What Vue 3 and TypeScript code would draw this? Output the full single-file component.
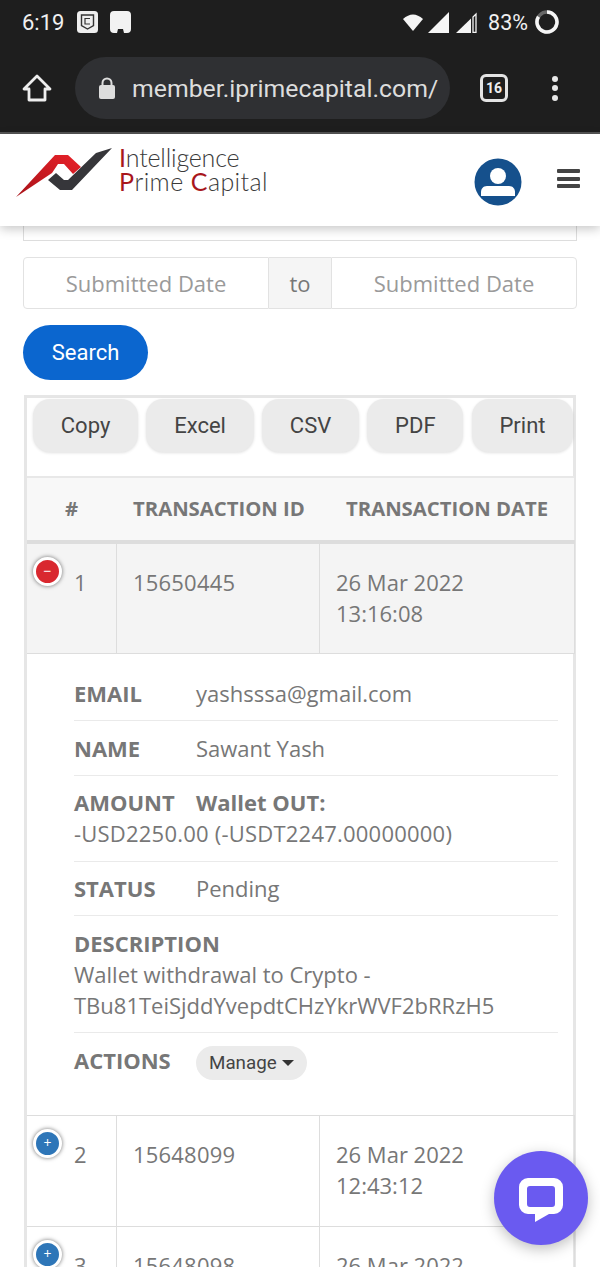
<script setup lang="ts">
interface Row { n: number; id: string; date: string; time: string; open?: boolean }
const rows: Row[] = [
  { n: 1, id: '15650445', date: '26 Mar 2022', time: '13:16:08', open: true },
  { n: 2, id: '15648099', date: '26 Mar 2022', time: '12:43:12' },
  { n: 3, id: '15648098', date: '26 Mar 2022', time: '12:40:00' },
]
const exportsList = ['Copy', 'Excel', 'CSV', 'PDF', 'Print']
</script>

<template>
  <div class="page">
    <div class="chrome">
      <div class="status">
        <span class="clock">6:19</span>
        <svg class="app" width="21" height="22" viewBox="0 0 21 22"><rect width="21" height="22" rx="3.500" fill="#eee"/><path d="M4.500 4h12v10.500l-6 3.500-6-3.500z" fill="none" stroke="#333" stroke-width="1.400"/><path d="M13 7.500H8v5.500h5" fill="none" stroke="#333" stroke-width="1.200"/></svg>
        <svg class="app" width="21" height="22" viewBox="0 0 21 22"><path d="M4 0h13a4 4 0 0 1 4 4v14a4 4 0 0 1-4 4h-3l-1-4H8l-1 4H4a4 4 0 0 1-4-4V4a4 4 0 0 1 4-4z" fill="#f2f2f2"/></svg>
        <span class="spacer"></span>
        <svg width="22" height="20" viewBox="0 0 22 20"><path d="M1 7 Q11 -2 21 7 L11 19z" fill="#f5f5f5"/></svg>
        <svg class="sig" width="21" height="21" viewBox="0 0 21 21"><path d="M21 0v21H0z" fill="#f5f5f5"/></svg>
        <svg class="sig2" width="21" height="21" viewBox="0 0 21 21"><path d="M15 6.500V21H0z" fill="#f5f5f5"/><path d="M20 2v18.300H17V5z" fill="none" stroke="#f5f5f5" stroke-width="1.300"/></svg>
        <span class="pct">83%</span>
        <svg class="batt" width="24" height="24" viewBox="0 0 24 24"><circle cx="12" cy="12" r="10" fill="none" stroke="#666" stroke-width="3.500"/><path d="M12 2A10 10 0 1 1 3.500 6.700" fill="none" stroke="#f5f5f5" stroke-width="3.500"/></svg>
      </div>
      <div class="toolbar">
        <svg class="home" width="30" height="30" viewBox="0 0 30 30"><path d="M15 3 2 16h5v11h16V16h5z" fill="none" stroke="#eee" stroke-width="2.800" stroke-linejoin="round"/></svg>
        <div class="omni">
          <svg width="18" height="24" viewBox="0 0 18 24"><path d="M4.500 10V7a4.500 4.500 0 0 1 9 0v3" fill="none" stroke="#ddd" stroke-width="2"/><rect x="1" y="9" width="16" height="14" rx="2" fill="#ddd"/></svg>
          <span class="url">member.iprimecapital.com/</span>
        </div>
        <div class="tabs">16</div>
        <div class="dots"><i></i><i></i><i></i></div>
      </div>
    </div>

    <header class="site">
      <svg class="mark" width="100" height="52" viewBox="0 0 100 52">
        <defs><linearGradient id="r" x1="0" y1="1" x2="1" y2="0"><stop offset="0" stop-color="#a81218"/><stop offset="1" stop-color="#e8222a"/></linearGradient></defs>
        <path d="M0 49 39 7h13l13 12-8 7-9-10H42L36 25z" fill="url(#r)"/>
        <path d="M32 32l8-7 8 7h4L80 5 96 0 56 42H44z" fill="#36363a"/>
      </svg>
      <div class="brand">
        <div class="b1"><em>I</em>ntelligence</div>
        <div class="b2"><em>P</em>rime <em>C</em>apital</div>
      </div>
      <span class="spacer"></span>
      <svg class="avatar" width="48" height="48" viewBox="0 0 48 48">
        <circle cx="24" cy="24" r="23.500" fill="#15508c"/>
        <circle cx="24" cy="18" r="8" fill="#fff"/>
        <path d="M7 38v-4c0-3 2-6 6-6h22c4 0 6 3 6 6v4z" fill="#fff"/>
      </svg>
      <div class="burger"><i></i><i></i><i></i></div>
    </header>

    <main class="content">
      <div class="stub"></div>
      <div class="dates">
        <div class="date">Submitted Date</div>
        <div class="to">to</div>
        <div class="date">Submitted Date</div>
      </div>
      <button class="search">Search</button>

      <div class="wrap">
        <div class="exports">
          <button v-for="e in exportsList" :key="e" class="exp">{{ e }}</button>
        </div>
        <table>
          <colgroup><col class="c1"><col class="c2"><col class="c3"></colgroup>
          <thead>
            <tr><th class="center">#</th><th>TRANSACTION ID</th><th class="th3">TRANSACTION DATE</th></tr>
          </thead>
          <tbody>
            <template v-for="r in rows" :key="r.n">
              <tr class="row" :class="{ opened: r.open }">
                <td class="num">
                  <span class="ctl" :class="r.open ? 'minus' : 'plus'">{{ r.open ? '−' : '+' }}</span>
                  {{ r.n }}
                </td>
                <td class="idc">{{ r.id }}</td>
                <td>{{ r.date }}<br>{{ r.time }}</td>
              </tr>
              <tr v-if="r.open" class="child">
                <td colspan="3">
                  <ul>
                    <li><b>EMAIL</b>yashsssa@gmail.com</li>
                    <li><b>NAME</b>Sawant Yash</li>
                    <li><b>AMOUNT</b><strong>Wallet OUT:</strong><br><span class="amt">-USD2250.00 (-USDT2247.00000000)</span></li>
                    <li><b>STATUS</b>Pending</li>
                    <li><b>DESCRIPTION</b><br>Wallet withdrawal to Crypto -<br>TBu81TeiSjddYvepdtCHzYkrWVF2bRRzH5</li>
                    <li class="act"><b>ACTIONS</b><button class="manage">Manage<i class="caret"></i></button></li>
                  </ul>
                </td>
              </tr>
            </template>
          </tbody>
        </table>
      </div>
    </main>

    <div class="chat">
      <svg width="44" height="44" viewBox="0 0 44 44"><path fill-rule="evenodd" fill="#fff" d="M9 0h26a9 9 0 0 1 9 9v18a9 9 0 0 1-9 9H30l-14 8v-8H9a9 9 0 0 1-9-9V9a9 9 0 0 1 9-9zM11 8a3 3 0 0 0-3 3v15a3 3 0 0 0 3 3h22a3 3 0 0 0 3-3V11a3 3 0 0 0-3-3z"/></svg>
    </div>
  </div>
</template>

<style>
html, body { margin: 0; height: 1267px; overflow: hidden; background: #fff; }
</style>

<style scoped>
.page { position: relative; width: 600px; height: 1267px; overflow: hidden; font-family: "Open Sans", sans-serif; color: #777; }
.spacer { flex: 1; }
.chrome { height: 132px; background: #1e1e1e; border-bottom: 2px solid #555; color: #eee; font-family: Roboto, sans-serif; }
.status { height: 44px; display: flex; align-items: center; padding: 0 41px 0 22px; }
.clock { font-size: 22px; width: 55px; color: #f0f0f0; }
.app { margin-right: 12px; }
.sig { margin-left: 4px; }
.sig2 { margin-left: 7px; }
.pct { font-size: 21.500px; margin-left: 11px; color: #f0f0f0; }
.batt { margin-left: 7px; }
.toolbar { height: 88px; display: flex; align-items: center; }
.home { margin-left: 22px; }
.omni { margin-left: 23px; width: 375px; height: 62px; border-radius: 31px; background: #2f3033; display: flex; align-items: center; box-sizing: border-box; padding-left: 23px; overflow: hidden; }
.url { margin-left: 16px; font-size: 24.800px; color: #ddd; white-space: nowrap; }
.tabs { margin-left: 30px; width: 28px; height: 28px; box-sizing: border-box; border: 3px solid #e4e4e4; border-radius: 6px; font-size: 14px; font-weight: 700; display: flex; align-items: center; justify-content: center; }
.dots { margin-left: 44px; display: flex; flex-direction: column; gap: 3.500px; }
.dots i { width: 6px; height: 6px; border-radius: 50%; background: #e8e8e8; display: block; }

.site { position: relative; z-index: 2; height: 92px; background: #fff; box-shadow: 0 3px 10px rgba(0,0,0,.22); display: flex; align-items: flex-start; padding: 13px 20px 0 16px; box-sizing: border-box; }
.mark { flex: none; margin-top: 1px; }
.brand { margin: -2px 0 0 3px; font-family: Lato, sans-serif; font-weight: 300; color: #3a3a3a; line-height: 24px; }
.brand em { font-style: normal; color: #a8161c; font-weight: 400; }
.b1 { font-size: 25px; letter-spacing: -.2px; }
.b2 { font-size: 25px; letter-spacing: .4px; }
.avatar { margin-top: 11px; margin-right: 35px; }
.burger { display: flex; flex-direction: column; gap: 3.500px; margin-top: 22px; }
.burger i { display: block; width: 23px; height: 4px; background: #444; border-radius: 1px; }

.content { padding: 0 23px; }
.stub { height: 14px; border: 1px solid #ddd; border-top: 0; }
.dates { margin-top: 16px; height: 52px; display: grid; grid-template-columns: 246px 62px 246px; font-size: 22px; box-sizing: border-box; }
.date, .to { padding-bottom: 1px; box-sizing: border-box; }
.date { border: 1px solid #e2e2e2; display: flex; align-items: center; justify-content: center; color: #9a9a9a; border-radius: 4px 0 0 4px; }
.date:last-child { border-radius: 0 4px 4px 0; }
.to { background: #f5f5f5; border-top: 1px solid #e2e2e2; border-bottom: 1px solid #e2e2e2; display: flex; align-items: center; justify-content: center; color: #777; }
.search { display: block; margin-top: 16px; width: 125px; height: 55px; border: 0; border-radius: 28px; background: #0b66cf; color: #fff; font: 400 22px Roboto, sans-serif; }

.wrap { margin: 15px 0 0 1px; width: 552px; border: 3px solid #e6e6e6; border-bottom: 0; box-sizing: border-box; }
.exports { display: flex; gap: 8.300px; height: 78px; padding: 1px 0 0 6px; box-sizing: border-box; }
.exp { height: 53px; padding: 0 27.800px; flex: none; border: 0; border-radius: 17px; background: #ebebeb; box-shadow: 0 1px 3px rgba(0,0,0,.12); color: #444; font: 400 22px Roboto, sans-serif; }
table { width: 547px; border-collapse: collapse; table-layout: fixed; border-top: 2px solid #e8e8e8; font-size: 22px; line-height: 31px; }
.c1 { width: 89px; } .c2 { width: 203px; } .c3 { width: 255px; }
th { height: 65px; padding: 0 0 2px 17px; background: #f8f8f8; border-bottom: 4px solid #ddd; text-align: left; font-size: 20.300px; font-weight: 700; color: #777; white-space: nowrap; box-sizing: border-box; }
th.center { text-align: center; padding: 0 0 2px; }
th.th3 { padding-left: 27px; }
.row td { height: 111px; padding: 23px 16.500px 0; box-sizing: border-box; vertical-align: top; border: 1px solid #ddd; border-top: 0; }
.row.opened td { background: #f4f4f4; }
.row td:first-child { border-left: 0; }
.row .idc { letter-spacing: .2px; }
.num { position: relative; padding-left: 47px !important; }
.ctl { position: absolute; left: 6px; top: 13px; width: 23px; height: 23px; border: 3px solid #fff; border-radius: 50%; box-shadow: 0 0 4px rgba(0,0,0,.55); color: #fff; font-size: 14px; line-height: 22px; text-align: center; }
.minus { background: #d9282f; }
.plus { background: #2e76b8; }
.child td { height: 462px; padding: 13px 16px 0 47px; box-sizing: border-box; vertical-align: top; border-bottom: 1px solid #ddd; }
ul { margin: 0; padding: 0; list-style: none; }
li { padding: 11.350px 0; border-bottom: 1px solid #eaeaea; white-space: nowrap; }
li:last-child { border-bottom: 0; }
li b, li strong { font-weight: 700; }
li b { display: inline-block; min-width: 122px; }
.amt { letter-spacing: .22px; }
.act { padding-top: 12px; }
.manage { height: 34px; padding: 0 13px; border: 0; border-radius: 17px; background: #ebebeb; color: #444; font: 400 18.800px Roboto, sans-serif; vertical-align: middle; display: inline-flex; align-items: center; }
.caret { width: 0; height: 0; margin-left: 5px; border-left: 6px solid transparent; border-right: 6px solid transparent; border-top: 6px solid #333; }

.chat { position: absolute; left: 494px; top: 1151px; z-index: 3; width: 94px; height: 94px; border-radius: 50%; background: #6a5af0; box-shadow: 0 4px 14px rgba(0,0,0,.25); display: flex; align-items: center; justify-content: center; }
.chat svg { margin-top: 3px; }
</style>
